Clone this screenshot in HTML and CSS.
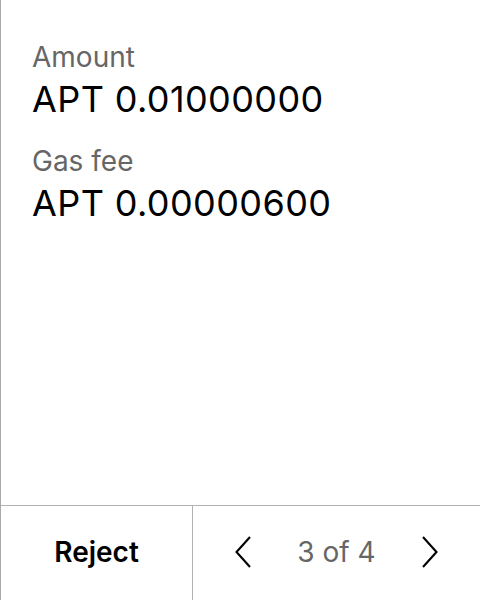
FILE: index.html
```html
<!DOCTYPE html>
<html>
<head>
<meta charset="utf-8">
<link rel="stylesheet" href="styles.css">
</head>
<body>
<div class="screen">
  <main class="content">
    <div class="field">
      <div class="label">Amount</div>
      <div class="value">APT 0.01000000</div>
    </div>
    <div class="field">
      <div class="label">Gas fee</div>
      <div class="value">APT 0.00000600</div>
    </div>
  </main>
  <footer class="footer">
    <div class="reject">Reject</div>
    <div class="pager">
      <svg class="chev" width="16" height="32" viewBox="0 0 16 32"><path d="M15 1 L1.5 16 L15 31" fill="none" stroke="#000" stroke-width="2.1"/></svg>
      <span class="count">3 of 4</span>
      <svg class="chev" width="16" height="32" viewBox="0 0 16 32"><path d="M1 1 L14.5 16 L1 31" fill="none" stroke="#000" stroke-width="2.1"/></svg>
    </div>
  </footer>
</div>
</body>
</html>
```
FILE: styles.css
```css
html, body {
  margin: 0;
  padding: 0;
  background: #fff;
}
body {
  font-family: Inter, "Noto Sans", sans-serif;
}
.screen {
  width: 479px;
  height: 600px;
  border-left: 1px solid #aaaaaa;
  display: flex;
  flex-direction: column;
}
.content {
  flex: 1;
  padding: 40px 0 0 31px;
  display: flex;
  flex-direction: column;
  gap: 23px;
}
.label {
  font-size: 28px;
  line-height: 34px;
  color: #666;
}
.value {
  margin-top: 3px;
  font-size: 36px;
  line-height: 44px;
  letter-spacing: 0.4px;
  color: #000;
}
.footer {
  height: 95px;
  box-sizing: border-box;
  padding-bottom: 3px;
  border-top: 1px solid #b3b3b3;
  display: flex;
}
.reject {
  width: 191px;
  border-right: 1px solid #b3b3b3;
  margin-bottom: -3px;
  padding-bottom: 3px;
  display: flex;
  align-items: center;
  justify-content: center;
  font-size: 28px;
  font-weight: 600;
  color: #000;
}
.pager {
  flex: 1;
  display: flex;
  align-items: center;
  justify-content: center;
  gap: 46px;
}
.count {
  font-size: 28px;
  color: #666;
}
.chev {
  display: block;
}
```
